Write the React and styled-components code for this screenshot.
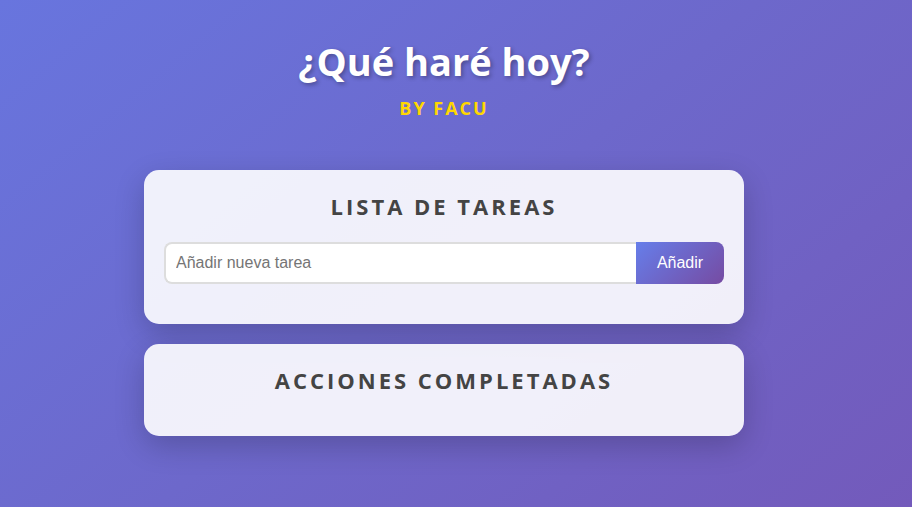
import React from "react";
import styled, { createGlobalStyle } from "styled-components";

const GlobalStyle = createGlobalStyle`
  html, body {
    margin: 0;
    padding: 0;
    height: 100%;
  }
  body {
    font-family: "Open Sans", "Noto Sans", sans-serif;
    background: linear-gradient(140deg, #6875de 0%, #6d68cb 50%, #735abb 100%);
    min-height: 100vh;
  }
`;

const Page = styled.div`
  min-height: 100vh;
  box-sizing: border-box;
  padding: 39px 24px 20px 0;
  display: flex;
  flex-direction: column;
  align-items: center;
`;

const Header = styled.header`
  text-align: center;
  margin-bottom: 51px;

  h1 {
    margin: 0 0 13px;
    font-size: 38px;
    line-height: 45px;
    font-weight: 700;
    color: #fff;
    text-shadow: 2px 2px 4px rgba(0, 0, 0, 0.3);
  }

  p {
    margin: 0;
    font-size: 18px;
    line-height: 22px;
    font-weight: 700;
    letter-spacing: 2px;
    color: #ffd700;
  }
`;

const Card = styled.section`
  width: 600px;
  box-sizing: border-box;
  padding: 20px;
  margin-bottom: 20px;
  background: rgba(255, 255, 255, 0.9);
  border-radius: 15px;
  box-shadow: 0 10px 30px rgba(0, 0, 0, 0.2);

  h2 {
    margin: 0 0 20px;
    text-align: center;
    font-size: 22px;
    line-height: 32px;
    font-weight: 700;
    letter-spacing: 3px;
    color: #444;
  }
`;

const InputRow = styled.form`
  display: flex;
  margin-bottom: 20px;
`;

const TaskInput = styled.input`
  flex: 1;
  height: 42px;
  box-sizing: border-box;
  padding: 0 10px;
  border: 2px solid #ddd;
  border-right: none;
  border-radius: 8px 0 0 8px;
  font-family: "Liberation Sans", Arial, sans-serif;
  font-size: 16px;
  color: #333;
  background: #fff;
  outline: none;

  &::placeholder {
    color: #757575;
  }
`;

const AddButton = styled.button`
  width: 88px;
  height: 42px;
  border: none;
  border-radius: 0 8px 8px 0;
  background: linear-gradient(135deg, #667eea 0%, #764ba2 100%);
  color: #fff;
  font-family: "Liberation Sans", Arial, sans-serif;
  font-size: 16px;
  cursor: pointer;
`;

export default function App() {
  return (
    <>
      <GlobalStyle />
      <Page>
        <Header>
          <h1>¿Qué haré hoy?</h1>
          <p>BY FACU</p>
        </Header>
        <Card>
          <h2>LISTA DE TAREAS</h2>
          <InputRow onSubmit={(e) => e.preventDefault()}>
            <TaskInput placeholder="Añadir nueva tarea" />
            <AddButton type="submit">Añadir</AddButton>
          </InputRow>
        </Card>
        <Card>
          <h2>ACCIONES COMPLETADAS</h2>
        </Card>
      </Page>
    </>
  );
}
